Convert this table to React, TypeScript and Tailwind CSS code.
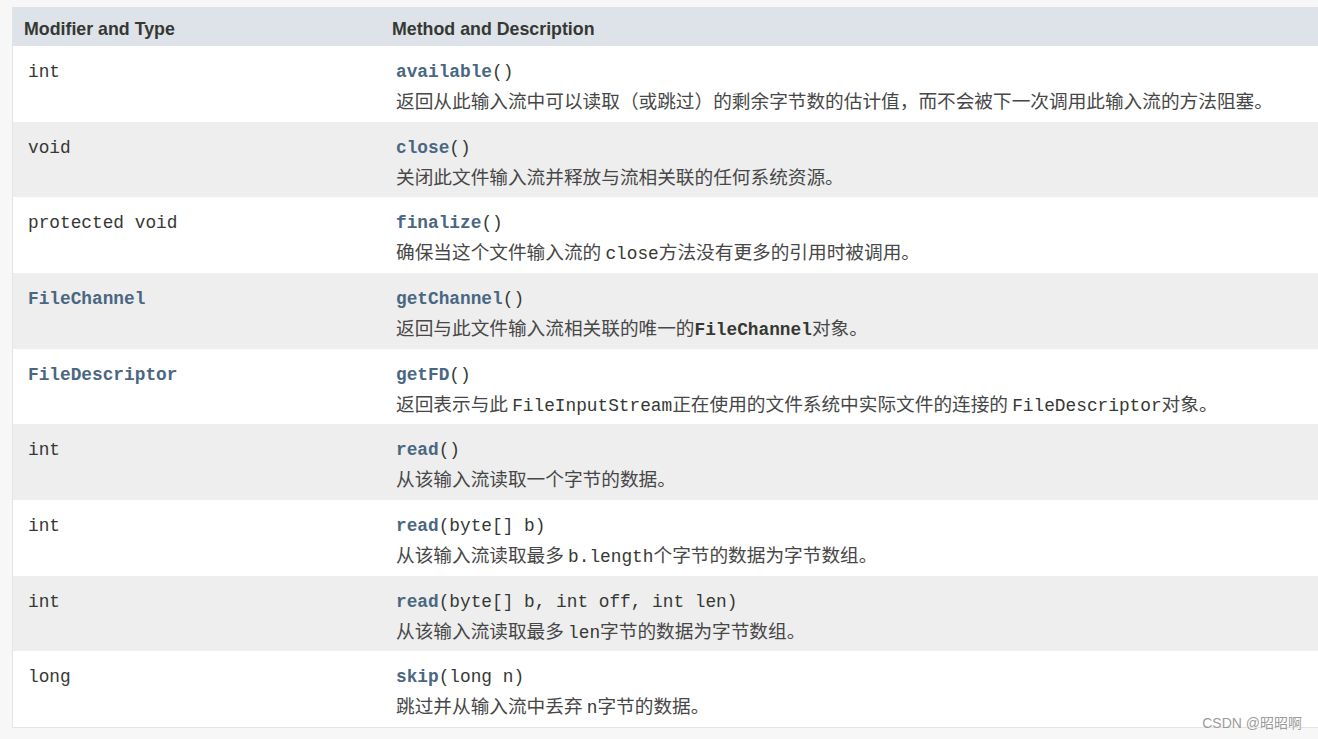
const rows = [
  {
    type: 'int',
    name: 'available',
    args: '()',
    desc: [{ t: '返回从此输入流中可以读取（或跳过）的剩余字节数的估计值，而不会被下一次调用此输入流的方法阻塞。' }],
  },
  {
    type: 'void',
    name: 'close',
    args: '()',
    desc: [{ t: '关闭此文件输入流并释放与流相关联的任何系统资源。' }],
  },
  {
    type: 'protected void',
    name: 'finalize',
    args: '()',
    desc: [{ t: '确保当这个文件输入流的 ' }, { t: 'close', code: true }, { t: '方法没有更多的引用时被调用。' }],
  },
  {
    type: 'FileChannel',
    link: true,
    name: 'getChannel',
    args: '()',
    desc: [{ t: '返回与此文件输入流相关联的唯一的' }, { t: 'FileChannel', code: true, bold: true }, { t: '对象。' }],
  },
  {
    type: 'FileDescriptor',
    link: true,
    name: 'getFD',
    args: '()',
    desc: [
      { t: '返回表示与此 ' },
      { t: 'FileInputStream', code: true },
      { t: '正在使用的文件系统中实际文件的连接的 ' },
      { t: 'FileDescriptor', code: true },
      { t: '对象。' },
    ],
  },
  {
    type: 'int',
    name: 'read',
    args: '()',
    desc: [{ t: '从该输入流读取一个字节的数据。' }],
  },
  {
    type: 'int',
    name: 'read',
    args: '(byte[] b)',
    desc: [{ t: '从该输入流读取最多 ' }, { t: 'b.length', code: true }, { t: '个字节的数据为字节数组。' }],
  },
  {
    type: 'int',
    name: 'read',
    args: '(byte[] b, int off, int len)',
    desc: [{ t: '从该输入流读取最多 ' }, { t: 'len', code: true }, { t: '字节的数据为字节数组。' }],
  },
  {
    type: 'long',
    name: 'skip',
    args: '(long n)',
    desc: [{ t: '跳过并从输入流中丢弃 ' }, { t: 'n', code: true }, { t: '字节的数据。' }],
  },
];

const mono = "font-['Liberation_Mono','Noto_Sans_CJK_SC',monospace]";

export default function App() {
  return (
    <div className="relative min-h-[739px] bg-[#f7f7f7] pt-[7px] pl-[12px]">
      <div className="border-l border-b border-[#e4e4e4] text-[#353833]">
        <div className="grid h-[39px] grid-cols-[368px_1fr] items-center bg-[#dee3e9] pt-[5px] font-['Liberation_Sans',Arial,sans-serif] text-[17.8px] font-bold">
          <div className="pl-[11px]">Modifier and Type</div>
          <div className="pl-[11px]">Method and Description</div>
        </div>
        {rows.map((r, i) => (
          <div
            key={i}
            className={`grid h-[75.67px] grid-cols-[368px_1fr] pt-[11px] leading-[30px] ${
              i % 2 === 0 ? 'bg-white' : 'bg-[#eeeeef]'
            }`}
          >
            <div
              className={`pl-[15px] ${mono} text-[17.8px] ${r.link ? 'font-bold text-[#4a6782]' : ''}`}
            >
              {r.type}
            </div>
            <div className="pl-[15px]">
              <div className={`h-[30px] ${mono} text-[17.8px]`}>
                <span className="font-bold text-[#4a6782]">{r.name}</span>
                {r.args}
              </div>
              <div className="-mt-[2px] h-[30px] whitespace-nowrap font-['Noto_Sans_CJK_SC',sans-serif] text-[18.67px] text-[#474747]">
                {r.desc.map((d, j) =>
                  d.code ? (
                    <span key={j} className={`${mono} text-[17.8px] text-[#353833] ${d.bold ? 'font-bold' : ''}`}>
                      {d.t}
                    </span>
                  ) : (
                    <span key={j}>{d.t}</span>
                  )
                )}
              </div>
            </div>
          </div>
        ))}
      </div>
      <div className="absolute right-[16px] top-[713px] font-['Liberation_Sans','Noto_Sans_CJK_SC',sans-serif] text-[14px] text-[#9b9b9b] [text-shadow:0_0_2px_#fff]">
        CSDN @昭昭啊
      </div>
    </div>
  );
}
